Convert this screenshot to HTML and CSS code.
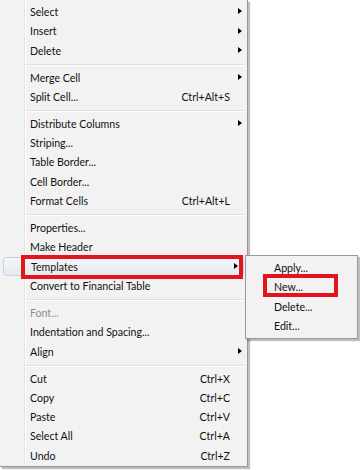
FILE: index.html
```html
<!DOCTYPE html>
<html>
<head>
<meta charset="utf-8">
<link rel="stylesheet" href="styles.css">
</head>
<body>
<div class="screen">
  <div class="menu main">
    <div class="item"><span class="label">Select</span><span class="key"></span><span class="arrow"></span></div>
    <div class="item"><span class="label">Insert</span><span class="key"></span><span class="arrow"></span></div>
    <div class="item"><span class="label">Delete</span><span class="key"></span><span class="arrow"></span></div>
    <div class="sep"></div>
    <div class="item"><span class="label">Merge Cell</span><span class="key"></span><span class="arrow"></span></div>
    <div class="item"><span class="label">Split Cell...</span><span class="key">Ctrl+Alt+S</span><span class="noarrow"></span></div>
    <div class="sep"></div>
    <div class="item"><span class="label">Distribute Columns</span><span class="key"></span><span class="arrow"></span></div>
    <div class="item"><span class="label">Striping...</span><span class="key"></span><span class="noarrow"></span></div>
    <div class="item"><span class="label">Table Border...</span><span class="key"></span><span class="noarrow"></span></div>
    <div class="item"><span class="label">Cell Border...</span><span class="key"></span><span class="noarrow"></span></div>
    <div class="item"><span class="label">Format Cells</span><span class="key">Ctrl+Alt+L</span><span class="noarrow"></span></div>
    <div class="sep"></div>
    <div class="item"><span class="label">Properties...</span><span class="key"></span><span class="noarrow"></span></div>
    <div class="item"><span class="label">Make Header</span><span class="key"></span><span class="noarrow"></span></div>
    <div class="item active"><span class="label">Templates</span><span class="key"></span><span class="arrow"></span></div>
    <div class="item"><span class="label">Convert to Financial Table</span><span class="key"></span><span class="noarrow"></span></div>
    <div class="sep"></div>
    <div class="item disabled"><span class="label">Font...</span><span class="key"></span><span class="noarrow"></span></div>
    <div class="item"><span class="label">Indentation and Spacing...</span><span class="key"></span><span class="noarrow"></span></div>
    <div class="item"><span class="label">Align</span><span class="key"></span><span class="arrow"></span></div>
    <div class="sep"></div>
    <div class="item"><span class="label">Cut</span><span class="key">Ctrl+X</span><span class="noarrow"></span></div>
    <div class="item"><span class="label">Copy</span><span class="key">Ctrl+C</span><span class="noarrow"></span></div>
    <div class="item"><span class="label">Paste</span><span class="key">Ctrl+V</span><span class="noarrow"></span></div>
    <div class="item"><span class="label">Select All</span><span class="key">Ctrl+A</span><span class="noarrow"></span></div>
    <div class="item"><span class="label">Undo</span><span class="key">Ctrl+Z</span><span class="noarrow"></span></div>
  </div>

  <div class="menu sub">
    <div class="item"><span class="label">Apply...</span></div>
    <div class="item"><span class="label">New...</span></div>
    <div class="item"><span class="label">Delete...</span></div>
    <div class="item"><span class="label">Edit...</span></div>
  </div>

  <div class="mark mark-templates"></div>
  <div class="mark mark-new"></div>
</div>
</body>
</html>
```
FILE: styles.css
```css
html, body {
  margin: 0;
  padding: 0;
  background: #ffffff;
}

.screen {
  position: relative;
  width: 360px;
  height: 470px;
  overflow: hidden;
  font-family: Lato, "Noto Sans", sans-serif;
  font-size: 10.6px;
  color: #111;
}

.menu {
  background: #f2f2f2;
  box-sizing: border-box;
}

.main {
  width: 248px;
  padding: 2.3px 0 1px 0;
  border-right: 1px solid #979797;
  border-bottom: 1px solid #979797;
  box-shadow: 2px 2px 1px rgba(0, 0, 0, 0.25);
  background-image: linear-gradient(to right, transparent 24px, #e2e3e3 24px, #e2e3e3 25px, #ffffff 25px, #ffffff 26px, transparent 26px);
}

.item {
  display: flex;
  align-items: center;
  height: 19.33px;
  padding-left: 30px;
  white-space: nowrap;
}

.label {
  flex: 1;
}

.key {
  padding-right: 4px;
}

.arrow,
.noarrow {
  width: 13px;
  height: 7px;
  flex: none;
  box-sizing: border-box;
}

.arrow::before {
  content: "";
  display: block;
  margin-left: 4px;
  width: 0;
  height: 0;
  border-top: 3.5px solid transparent;
  border-bottom: 3.5px solid transparent;
  border-left: 4px solid #000;
}

.disabled {
  color: #8d8d8d;
}

.active {
  margin: 0 3px;
  padding-left: 27px;
  border: 1px solid #c9d3df;
  border-radius: 3px;
  height: 17.33px;
  background: linear-gradient(to bottom, #f4f6f9, #e5eaf0);
}

.sep {
  height: 7.6px;
  margin-left: 26px;
  margin-right: 2px;
  box-sizing: border-box;
  padding-top: 3.4px;
}

.sep::before {
  content: "";
  display: block;
  height: 1px;
  background: #e0e0e0;
  border-bottom: 1px solid #ffffff;
}

.sub {
  position: absolute;
  left: 245px;
  top: 255px;
  width: 113px;
  padding: 2.3px 0 2px 0;
  border: 1px solid #979797;
  box-shadow: 2px 2px 1px rgba(0, 0, 0, 0.25);
}

.sub .item {
  padding-left: 28px;
}

.mark {
  position: absolute;
  border: 4px solid #e4141e;
  box-sizing: border-box;
}

.mark-templates {
  left: 21px;
  top: 255px;
  width: 222px;
  height: 24px;
}

.mark-new {
  left: 263px;
  top: 274px;
  width: 75px;
  height: 23px;
}
```
